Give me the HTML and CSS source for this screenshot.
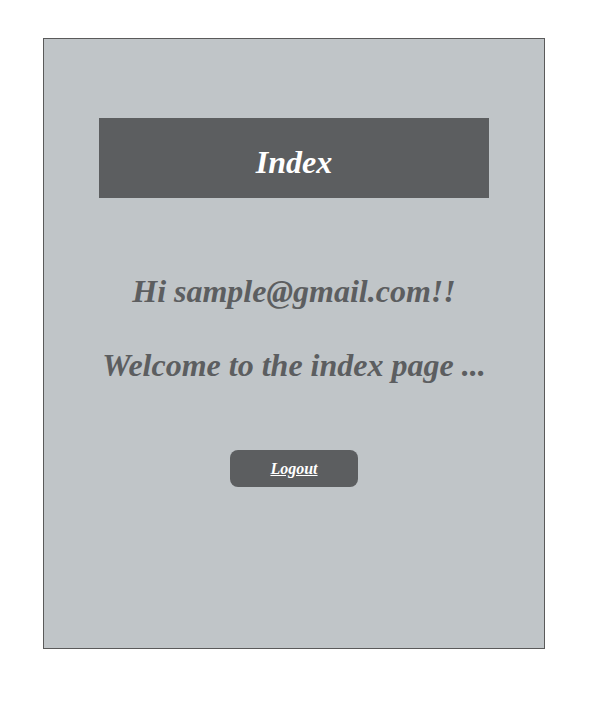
FILE: index.html
```html
<!DOCTYPE html>
<html>
<head>
<meta charset="utf-8">
<link rel="stylesheet" href="styles.css">
</head>
<body>
<div class="panel">
  <div class="header"><h1 class="title">Index</h1></div>
  <h2 class="greet">Hi sample@gmail.com!!</h2>
  <h2 class="greet welcome">Welcome to the index page ...</h2>
  <div class="actions"><a class="logout" href="#">Logout</a></div>
</div>
</body>
</html>
```
FILE: styles.css
```css
html, body {
  margin: 0;
  padding: 0;
  background: #ffffff;
}
body {
  padding: 38px 0 0 43px;
  font-family: "Liberation Serif", "Times New Roman", serif;
}
.panel {
  box-sizing: border-box;
  width: 502px;
  height: 611px;
  border: 1px solid #5a5a5a;
  background: #c0c5c8;
  padding-top: 79px;
  display: flex;
  flex-direction: column;
  align-items: center;
}
.header {
  box-sizing: border-box;
  width: 390px;
  height: 80px;
  padding-top: 8px;
  background: #5c5e60;
  display: flex;
  align-items: center;
  justify-content: center;
}
.title {
  margin: 0;
  color: #ffffff;
  font-size: 32px;
  font-weight: bold;
  font-style: italic;
}
.greet {
  margin: 0;
  color: #5c5e60;
  font-size: 32px;
  font-weight: bold;
  font-style: italic;
  line-height: 37px;
}
.greet:first-of-type {
  margin-top: 75px;
}
.welcome {
  margin-top: 37px;
}
.actions {
  margin-top: 66px;
}
.logout {
  display: flex;
  align-items: center;
  justify-content: center;
  width: 128px;
  height: 37px;
  border-radius: 8px;
  background: #5c5e60;
  color: #ffffff;
  font-size: 16px;
  font-weight: bold;
  font-style: italic;
}
```
